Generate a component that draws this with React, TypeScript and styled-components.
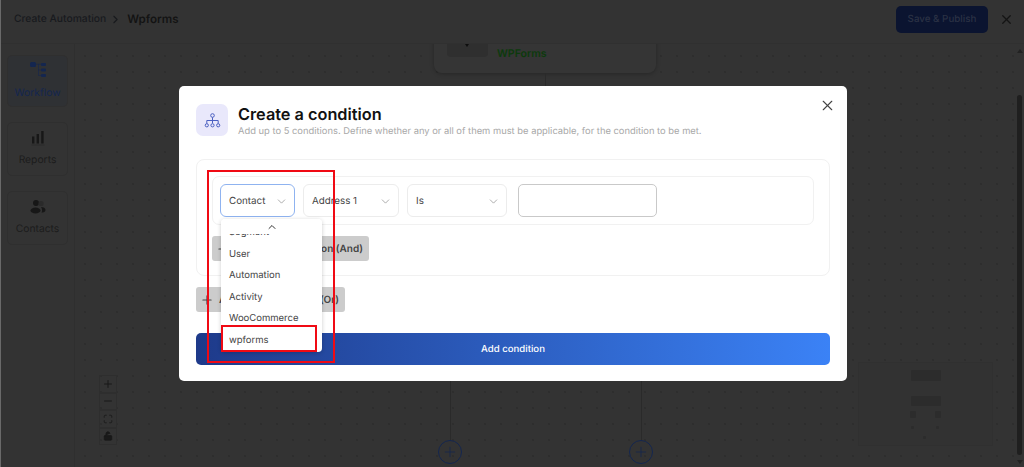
import React from "react";
import styled, { createGlobalStyle } from "styled-components";
import { ChevronDown, ChevronRight, ChevronUp, Plus, X, Minus, Maximize, LockOpen } from "lucide-react";

const Global = createGlobalStyle`
  html, body { margin: 0; padding: 0; height: 100%; background: #333333; overflow: hidden; }
  #root { height: 100%; }
  * { box-sizing: border-box; }
`;

const Page = styled.div`
  position: relative;
  width: 1024px;
  height: 467px;
  overflow: hidden;
  font-family: Inter, "Liberation Sans", sans-serif;
  text-rendering: geometricPrecision;
  background: #333333;
  border-left: 1px solid #6a6a6a;
  display: flex;
  flex-direction: column;
`;

const TopBar = styled.header`
  height: 44px;
  flex: none;
  display: flex;
  align-items: center;
  padding: 0 10px 5px 13px;
  border-bottom: 1px solid #303030;
  position: relative;
  z-index: 2;
  background: #333333;
`;

const Crumb = styled.span`
  font-size: 10.3px;
  font-weight: 500;
  color: #181a1e;
`;

const CrumbSep = styled.span`
  display: flex;
  margin: 0 5px 0 3px;
  color: #181a1e;
`;

const CrumbNow = styled.span`
  font-size: 11.6px;
  font-weight: 600;
  color: #131313;
`;

const PublishButton = styled.button`
  margin-left: auto;
  width: 92px;
  height: 27px;
  border: 0;
  border-radius: 5px;
  background: #0b1430;
  color: #2a3144;
  font: 500 9.8px Inter, "Liberation Sans", sans-serif;
  text-rendering: geometricPrecision;
  padding: 0;
`;

const TopClose = styled.span`
  display: flex;
  margin-left: 11px;
  color: #141414;
`;

const Body = styled.div`
  flex: 1;
  display: flex;
  min-height: 0;
`;

const Sidebar = styled.nav`
  width: 74px;
  flex: none;
  padding: 11px 6px 0 6px;
  display: flex;
  flex-direction: column;
  gap: 15px;
  border-right: 1px solid #2f2f2f;
`;

const SideItem = styled.div<{ $active?: boolean }>`
  height: ${(p) => (p.$active ? 52 : 54)}px;
  border: 1px solid #2f2f2f;
  border-radius: 5px;
  background: ${(p) => (p.$active ? "#2f3134" : "transparent")};
  display: flex;
  flex-direction: column;
  align-items: center;
  justify-content: center;
  gap: 8px;
  padding-bottom: 2px;
  color: ${(p) => (p.$active ? "#14264f" : "#1c1c1c")};
  font-size: 10.3px;
  line-height: 12px;
`;

const Canvas = styled.main`
  flex: 1;
  position: relative;
  background-color: #333333;
  background-image: radial-gradient(circle, #2b2b2b 0.6px, transparent 0.9px);
  background-size: 16px 16px;
  background-position: 2px 4px;
`;

const FlowNode = styled.div`
  position: absolute;
  left: 359px;
  top: -20px;
  width: 222px;
  height: 49px;
  border-radius: 8px;
  background: #353535;
  box-shadow: 0 1px 4px rgba(0, 0, 0, 0.25);
`;

const NodeThumb = styled.div`
  position: absolute;
  left: 13px;
  top: 8px;
  width: 41px;
  height: 25px;
  border-radius: 4px;
  background: #2f2f2f;
`;

const NodeMark = styled.div`
  position: absolute;
  left: 18px;
  top: 12px;
  width: 0;
  height: 0;
  border-left: 2px solid transparent;
  border-right: 2px solid transparent;
  border-top: 3px solid #0e0e0e;
`;

const NodeTitle = styled.span`
  position: absolute;
  left: 63px;
  top: 23px;
  font-size: 10.6px;
  font-weight: 600;
  color: #0c3a0c;
`;

const Wire = styled.div<{ $x: number; $y: number; $h: number }>`
  position: absolute;
  left: ${(p) => p.$x}px;
  top: ${(p) => p.$y}px;
  width: 1px;
  height: ${(p) => p.$h}px;
  background: #2a2a2a;
`;

const AddNode = styled.div<{ $x: number }>`
  position: absolute;
  left: ${(p) => p.$x}px;
  top: 396px;
  width: 24px;
  height: 24px;
  border-radius: 50%;
  border: 1px solid #14264f;
  color: #14264f;
  display: flex;
  align-items: center;
  justify-content: center;
`;

const ZoomTools = styled.div`
  position: absolute;
  left: 24px;
  top: 331px;
  display: flex;
  flex-direction: column;
`;

const ZoomTool = styled.div`
  width: 18px;
  height: 17.5px;
  border: 1px solid #2e2e2e;
  display: flex;
  align-items: center;
  justify-content: center;
  color: #191919;
`;

const MiniMap = styled.div`
  position: absolute;
  left: 783px;
  top: 318px;
  width: 135px;
  height: 84px;
  border: 1px solid #303030;
  background: #323232;
`;

const MiniBlock = styled.div<{ $x: number; $y: number; $w: number; $h: number }>`
  position: absolute;
  left: ${(p) => p.$x}px;
  top: ${(p) => p.$y}px;
  width: ${(p) => p.$w}px;
  height: ${(p) => p.$h}px;
  background: #2c2c2c;
  border-radius: 1px;
`;

const ScrollTrack = styled.div`
  position: absolute;
  right: 2px;
  top: 95px;
  width: 5px;
  height: 360px;
  border-radius: 3px;
  background: #1f1f1f;
`;

const ScrollArrow = styled.div<{ $up?: boolean }>`
  position: absolute;
  right: 1px;
  ${(p) => (p.$up ? "top: 49px;" : "top: 460px;")}
  width: 0;
  height: 0;
  border-left: 3.5px solid transparent;
  border-right: 3.5px solid transparent;
  ${(p) => (p.$up ? "border-bottom: 4px solid #222;" : "border-top: 4px solid #222;")}
`;

const Modal = styled.section`
  position: absolute;
  left: 178px;
  top: 86px;
  width: 668px;
  height: 295px;
  background: #fff;
  border-radius: 5px;
  padding: 18px 17px 16px;
  display: flex;
  flex-direction: column;
  z-index: 3;
`;

const ModalClose = styled.button`
  position: absolute;
  right: 11px;
  top: 11px;
  padding: 0;
  border: 0;
  background: none;
  display: flex;
  color: #444;
`;

const ModalHead = styled.div`
  display: flex;
  align-items: flex-start;
  gap: 10px;
`;

const HeadIcon = styled.div`
  width: 32px;
  height: 32px;
  border-radius: 7px;
  background: #e9e8fb;
  display: flex;
  align-items: center;
  justify-content: center;
`;

const HeadText = styled.div`
  display: flex;
  flex-direction: column;
  padding-top: 1px;
`;

const Title = styled.h2`
  margin: 0;
  font-size: 16.3px;
  line-height: 19px;
  font-weight: 600;
  color: #111;
`;

const Sub = styled.p`
  margin: 2px 0 0;
  font-size: 9.37px;
  line-height: 12px;
  color: #a8a8a8;
`;

const Group = styled.div`
  margin-top: 21px;
  height: 117px;
  flex: none;
  border: 1px solid #f1f1f1;
  border-radius: 8px;
  padding: 16px 15px;
  display: flex;
  flex-direction: column;
  align-items: flex-start;
`;

const Rule = styled.div`
  width: 100%;
  height: 49px;
  flex: none;
  border: 1px solid #f1f1f1;
  border-radius: 7px;
  padding: 7px;
  display: flex;
  align-items: center;
  gap: 8px;
`;

const SelectBox = styled.div<{ $w: number; $focus?: boolean }>`
  width: ${(p) => p.$w}px;
  height: 33px;
  border: 1px solid ${(p) => (p.$focus ? "#8fb3f0" : "#ececec")};
  border-radius: 6px;
  padding: 1px 6px 0 8px;
  display: flex;
  align-items: center;
  justify-content: space-between;
  font-size: 9.8px;
  color: #444;
`;

const Caret = styled(ChevronDown)`
  color: #8a8a8a;
`;

const ValueInput = styled.div`
  width: 139px;
  height: 33px;
  margin-left: 3px;
  border: 1px solid #c9c9c9;
  border-radius: 5px;
`;

const GrayButton = styled.div<{ $w: number; $top: number }>`
  width: ${(p) => p.$w}px;
  height: 25px;
  margin-top: ${(p) => p.$top}px;
  flex: none;
  background: #cccccc;
  border-radius: 3px;
  display: flex;
  align-items: center;
  justify-content: space-between;
  padding: 0 6px 0 4px;
  font-size: 10px;
  font-weight: 600;
  color: #444;
  white-space: nowrap;
`;

const Primary = styled.button`
  margin-top: 21px;
  height: 32px;
  flex: none;
  border: 0;
  border-radius: 5px;
  background: linear-gradient(90deg, #1e3a8a, #3b82f6);
  color: #fff;
  font: 500 9.6px Inter, "Liberation Sans", sans-serif;
  text-rendering: geometricPrecision;
`;

const Menu = styled.div`
  position: absolute;
  left: 42px;
  top: 133px;
  width: 101px;
  height: 133px;
  padding-bottom: 1px;
  background: #fff;
  border-radius: 4px;
  box-shadow: 0 1px 4px rgba(0, 0, 0, 0.2);
  overflow: hidden;
  display: flex;
  flex-direction: column;
  justify-content: flex-end;
  z-index: 1;
`;

const MenuUp = styled.div`
  position: absolute;
  left: 0;
  top: 0;
  width: 100%;
  height: 15px;
  background: #fff;
  display: flex;
  justify-content: center;
  align-items: center;
  color: #333;
  z-index: 1;
`;

const MenuItem = styled.div`
  height: 21.5px;
  flex: none;
  padding-left: 8px;
  display: flex;
  align-items: center;
  font-size: 9.5px;
  color: #444;
`;

const RedFrame = styled.div<{ $x: number; $y: number; $w: number; $h: number }>`
  position: absolute;
  left: ${(p) => p.$x}px;
  top: ${(p) => p.$y}px;
  width: ${(p) => p.$w}px;
  height: ${(p) => p.$h}px;
  border: 2px solid #f00a14;
  pointer-events: none;
  z-index: 2;
`;

const Sitemap = () => (
  <svg width="17" height="17" viewBox="0 0 17 17" fill="none" stroke="#4a5fc1" strokeWidth="1">
    <circle cx="8.5" cy="3.5" r="1.8" />
    <path d="M8.5 5.3v6M2.8 11.5V8.5h11.4v3" />
    <circle cx="2.8" cy="13.3" r="1.6" />
    <circle cx="8.5" cy="13.3" r="1.6" />
    <circle cx="14.2" cy="13.3" r="1.6" />
  </svg>
);

const WorkflowGlyph = () => (
  <svg width="18" height="18" viewBox="0 0 18 18" fill="#14264f">
    <rect x="1" y="1" width="6" height="5" rx="1.5" />
    <rect x="12" y="2" width="5" height="3" rx="1" />
    <rect x="12" y="7.5" width="5" height="3" rx="1" />
    <rect x="12" y="13" width="5" height="3" rx="1" />
    <path d="M7 3.2h5M9.5 3.2v11.3h2.5M9.5 9h2.5" stroke="#14264f" strokeWidth="0.6" fill="none" />
  </svg>
);

const BarsGlyph = () => (
  <svg width="14" height="16" viewBox="0 0 14 16" fill="#171717">
    <rect x="1" y="6.5" width="2.4" height="7" />
    <rect x="5.6" y="4" width="2.4" height="9.5" />
    <rect x="10.2" y="1" width="2.4" height="12.5" />
    <rect x="0.5" y="14.6" width="13" height="0.8" fill="#2a2a2a" />
  </svg>
);

const PeopleGlyph = () => (
  <svg width="16" height="16" viewBox="0 0 16 16" fill="#171717">
    <circle cx="6" cy="4" r="3" />
    <circle cx="11" cy="4.5" r="2.6" fill="#2a2a2a" />
    <ellipse cx="5.5" cy="11.5" rx="5" ry="3" />
    <path d="M11 8c2.6 0 4.5 1.2 4.5 3s-1.9 2.6-4 2.6c1-1.6.6-4-.5-5.6z" />
  </svg>
);

export default function App() {
  return (
    <>
      <Global />
      <Page>
        <TopBar>
          <Crumb>Create Automation</Crumb>
          <CrumbSep>
            <ChevronRight size={13} />
          </CrumbSep>
          <CrumbNow>Wpforms</CrumbNow>
          <PublishButton>Save &amp; Publish</PublishButton>
          <TopClose>
            <X size={15} />
          </TopClose>
        </TopBar>
        <Body>
          <Sidebar>
            <SideItem $active>
              <WorkflowGlyph />
              Workflow
            </SideItem>
            <SideItem>
              <BarsGlyph />
              Reports
            </SideItem>
            <SideItem>
              <PeopleGlyph />
              Contacts
            </SideItem>
          </Sidebar>
          <Canvas>
            <FlowNode>
              <NodeThumb>
                <NodeMark />
              </NodeThumb>
              <NodeTitle>WPForms</NodeTitle>
            </FlowNode>
            <Wire $x={470} $y={29} $h={14} />
            <Wire $x={375} $y={337} $h={60} />
            <Wire $x={566} $y={337} $h={60} />
            <AddNode $x={363}>
              <Plus size={16} strokeWidth={1.2} />
            </AddNode>
            <AddNode $x={554}>
              <Plus size={16} strokeWidth={1.2} />
            </AddNode>
            <ZoomTools>
              <ZoomTool>
                <Plus size={12} />
              </ZoomTool>
              <ZoomTool>
                <Minus size={12} />
              </ZoomTool>
              <ZoomTool>
                <Maximize size={10} />
              </ZoomTool>
              <ZoomTool>
                <LockOpen size={10} fill="#191919" />
              </ZoomTool>
            </ZoomTools>
            <MiniMap>
              <MiniBlock $x={52} $y={7} $w={30} $h={11} />
              <MiniBlock $x={52} $y={33} $w={30} $h={10} />
              <MiniBlock $x={51} $y={48} $w={6} $h={7} />
              <MiniBlock $x={76} $y={48} $w={6} $h={7} />
              <MiniBlock $x={52} $y={63} $w={3} $h={3} />
              <MiniBlock $x={77} $y={63} $w={3} $h={3} />
              <MiniBlock $x={64} $y={73} $w={3} $h={3} />
            </MiniMap>
          </Canvas>
        </Body>
        <ScrollArrow $up />
        <ScrollTrack />
        <ScrollArrow />
        <Modal>
          <ModalClose>
            <X size={17} strokeWidth={1.6} />
          </ModalClose>
          <ModalHead>
            <HeadIcon>
              <Sitemap />
            </HeadIcon>
            <HeadText>
              <Title>Create a condition</Title>
              <Sub>Add up to 5 conditions. Define whether any or all of them must be applicable, for the condition to be met.</Sub>
            </HeadText>
          </ModalHead>
          <Group>
            <Rule>
              <SelectBox $w={75} $focus>
                Contact
                <Caret size={13} strokeWidth={1.3} />
              </SelectBox>
              <SelectBox $w={96}>
                Address 1
                <Caret size={13} strokeWidth={1.3} />
              </SelectBox>
              <SelectBox $w={100}>
                Is
                <Caret size={13} strokeWidth={1.3} />
              </SelectBox>
              <ValueInput />
            </Rule>
            <GrayButton $w={157} $top={11}>
              <Plus size={14} />
              Add new condition (And)
            </GrayButton>
          </Group>
          <GrayButton $w={149} $top={11}>
            <Plus size={14} />
            Add condition group (Or)
          </GrayButton>
          <Primary>Add condition</Primary>
          <Menu>
            <MenuUp>
              <ChevronUp size={12} strokeWidth={2} />
            </MenuUp>
            <MenuItem>Segment</MenuItem>
            <MenuItem>User</MenuItem>
            <MenuItem>Automation</MenuItem>
            <MenuItem>Activity</MenuItem>
            <MenuItem>WooCommerce</MenuItem>
            <MenuItem>wpforms</MenuItem>
          </Menu>
          <RedFrame $x={28} $y={84} $w={128} $h={193} />
          <RedFrame $x={42} $y={239} $w={96} $h={27} />
        </Modal>
      </Page>
    </>
  );
}
